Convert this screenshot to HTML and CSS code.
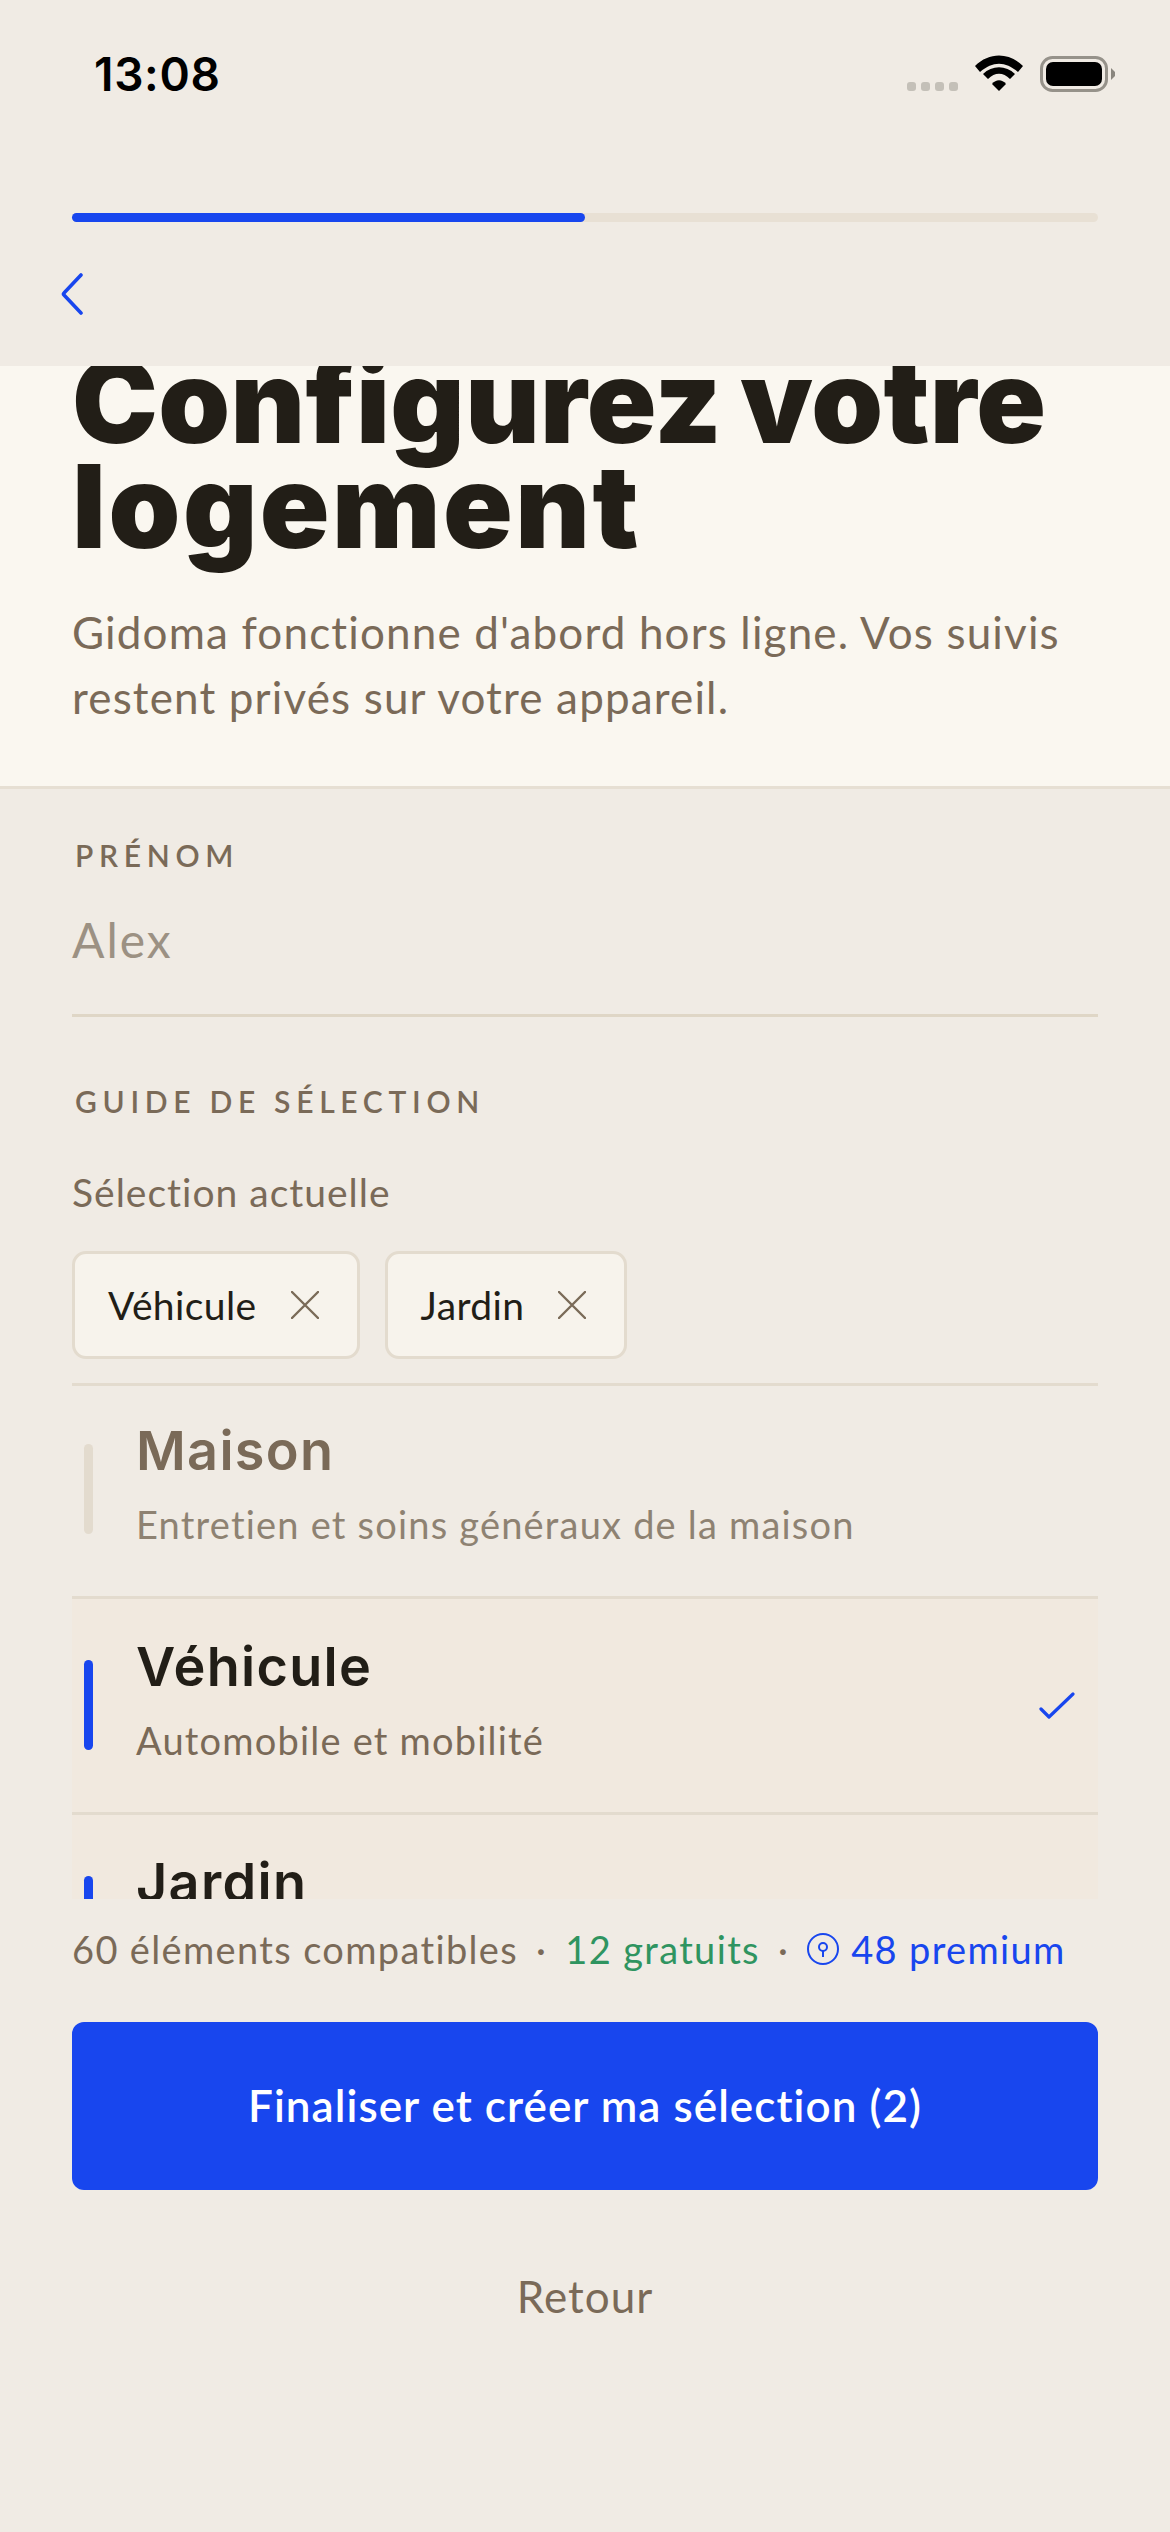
FILE: index.html
```html
<!DOCTYPE html>
<html lang="fr">
    <head>
        <meta charset="utf-8">
        <title>Gidoma</title>
        <link rel="stylesheet" href="styles.css">
    </head>
    <body>
        <div class="screen">
            <div class="topbar">
                <div class="status">
                    <span class="time">13:08</span>
                    <div class="status-icons">
                        <div class="signal"><i></i><i></i><i></i><i></i></div>
                        <svg class="wifi" width="48" height="36" viewBox="0 0 48 36">
                            <path d="M0 11C14-3 34-3 48 11L43 17C30 6 18 6 5 17Z"/>
                            <path d="M8 19C17 10 31 10 40 19L35 24C28 17 20 17 13 24Z"/>
                            <path d="M17 29C21 24 27 24 31 29L24 36Z"/>
                        </svg>
                        <svg class="battery" width="75" height="36" viewBox="0 0 75 36">
                            <rect x="1.5" y="1.5" width="65" height="33" rx="11" fill="none" stroke="#96928a" stroke-width="3"/>
                            <rect x="6" y="6" width="56" height="24" rx="7" fill="#000"/>
                            <path d="M71 12L75 16V20L71 24Z" fill="#8a867e"/>
                        </svg>
                    </div>
                </div>
                <div class="progress"><div class="progress-fill"></div></div>
                <svg class="back" width="24" height="42" viewBox="0 0 24 42">
                    <path d="M21 2L4 20Q3 21 4 22L21 40" fill="none" stroke="#1846ee" stroke-width="3.6" stroke-linecap="round"/>
                </svg>
            </div>

            <div class="scroll">
                <div class="hero">
                    <h1>Configurez votre <span class="wide">logement</span></h1>
                    <p>Gidoma fonctionne d'abord hors ligne. Vos suivis restent privés sur votre appareil.</p>
                </div>
                <div class="form">
                    <div class="label">PRÉNOM</div>
                    <div class="name-input">Alex</div>
                    <div class="label guide-label">GUIDE DE SÉLECTION</div>
                    <div class="current">Sélection actuelle</div>
                    <div class="chips">
                        <div class="chip">
                            <span>Véhicule</span>
                            <svg width="28" height="28" viewBox="0 0 28 28"><path d="M1 1L27 27M27 1L1 27" stroke="#7a6a58" stroke-width="2.4" stroke-linecap="round"/></svg>
                        </div>
                        <div class="chip">
                            <span>Jardin</span>
                            <svg width="28" height="28" viewBox="0 0 28 28"><path d="M1 1L27 27M27 1L1 27" stroke="#7a6a58" stroke-width="2.4" stroke-linecap="round"/></svg>
                        </div>
                    </div>
                    <div class="options">
                        <div class="option">
                            <div class="bar"></div>
                            <div class="option-text">
                                <div class="option-title">Maison</div>
                                <div class="option-sub">Entretien et soins généraux de la maison</div>
                            </div>
                        </div>
                        <div class="option selected">
                            <div class="bar"></div>
                            <div class="option-text">
                                <div class="option-title">Véhicule</div>
                                <div class="option-sub">Automobile et mobilité</div>
                            </div>
                            <svg class="check" width="36" height="28" viewBox="0 0 36 28"><path d="M2 17L10 25L34 2" fill="none" stroke="#1846ee" stroke-width="3.2" stroke-linecap="round" stroke-linejoin="round"/></svg>
                        </div>
                        <div class="option selected">
                            <div class="bar"></div>
                            <div class="option-text">
                                <div class="option-title">Jardin</div>
                            </div>
                        </div>
                    </div>
                </div>
            </div>

            <div class="stats">
                <span>60 éléments compatibles</span>
                <span class="dot">·</span>
                <span class="free">12 gratuits</span>
                <span class="dot">·</span>
                <span class="premium">
                    <svg width="32" height="32" viewBox="0 0 32 32" fill="none" stroke="#1846ee" stroke-width="2">
                        <circle cx="16" cy="16" r="15"/>
                        <circle cx="16" cy="14" r="4"/>
                        <path d="M16 18V24"/>
                    </svg>
                    48 premium
                </span>
            </div>
            <div class="finish">Finaliser et créer ma sélection (2)</div>
            <div class="retour">Retour</div>
        </div>
    </body>
</html>
```

FILE: styles.css
```css
*
{
    box-sizing: border-box;
}
html, body
{
    margin: 0;
    padding: 0;
}
.screen
{
    width: 1170px;
    height: 2532px;
    overflow: hidden;
    background-color: #f0ebe4;
    color: #7a6a58;
    font-family: Lato, "Noto Sans", sans-serif;
}

/* top */
.topbar
{
    height: 366px;
    padding-top: 46px;
}
.status
{
    display: flex;
    justify-content: space-between;
    align-items: flex-start;
    padding: 0 55px 0 94px;
}
.time
{
    font-family: Inter, sans-serif;
    font-size: 46px;
    line-height: 56px;
    font-weight: 600;
    letter-spacing: 0.7px;
    color: #000;
}
.status-icons
{
    display: flex;
    align-items: flex-end;
    margin-top: 9px;
    gap: 17px;
}
.signal
{
    display: flex;
    gap: 5px;
    margin-bottom: 1px;
}
.signal i
{
    width: 9px;
    height: 9px;
    border-radius: 3px;
    background-color: #c4c0b8;
}
.wifi
{
    display: block;
    margin-bottom: 1px;
}
.battery
{
    display: block;
}
.progress
{
    height: 9px;
    margin: 111px 72px 0;
    border-radius: 5px;
    background-color: #e8e0d4;
}
.progress-fill
{
    width: 513px;
    height: 9px;
    border-radius: 5px;
    background-color: #1846ee;
}
.back
{
    display: block;
    margin: 51px 0 0 60px;
}

/* scrolling part */
.scroll
{
    height: 1533px;
    overflow: hidden;
}
.hero
{
    display: flow-root;
    height: 423px;
    padding: 0 72px;
    background-color: #faf7f0;
    border-bottom: 3px solid #e6dfd3;
}
.hero h1
{
    margin: -17px 0 0;
    font-family: Inter, sans-serif;
    font-size: 115px;
    line-height: 105px;
    font-weight: 900;
    letter-spacing: 0.3px;
    word-spacing: -5px;
    color: #221e17;
}
.wide
{
    letter-spacing: 2.5px;
}
.hero p
{
    margin: 41px 0 0;
    font-size: 44px;
    line-height: 65px;
    letter-spacing: 1.15px;
}
.form
{
    padding: 46px 72px 0;
}
.label
{
    margin-left: 3px;
    font-size: 30px;
    line-height: 40px;
    font-weight: 600;
    letter-spacing: 5.7px;
}
.name-input
{
    margin-top: 32px;
    padding-bottom: 41px;
    font-size: 48px;
    line-height: 66px;
    letter-spacing: 2px;
    color: #9c9183;
    border-bottom: 3px solid #dfd6c6;
}
.guide-label
{
    margin-top: 64px;
}
.current
{
    margin-top: 46px;
    font-size: 39px;
    line-height: 50px;
    letter-spacing: 1px;
}
.chips
{
    display: flex;
    gap: 25px;
    margin-top: 34px;
    padding-bottom: 24px;
    border-bottom: 3px solid #e3dbce;
    height: 135px;
}
.chip
{
    display: flex;
    align-items: center;
    gap: 34px;
    height: 108px;
    padding: 0 38px 0 33px;
    border: 3px solid #e3dbce;
    border-radius: 14px;
    background-color: #f7f3ec;
    color: #221e17;
    font-size: 39px;
    letter-spacing: 0.4px;
}
.options
{
    margin-top: -3px;
}
.option
{
    display: flex;
    align-items: flex-start;
    gap: 43px;
    height: 216px;
    padding: 0 23px 0 12px;
    border-bottom: 3px solid #e3dbce;
}
.selected
{
    background-color: #f1e9df;
}
.bar
{
    width: 9px;
    height: 90px;
    margin-top: 61px;
    border-radius: 5px;
    background-color: #e3dbce;
}
.selected .bar
{
    background-color: #1846ee;
}
.option-text
{
    padding-top: 32px;
}
.option-title
{
    font-family: Inter, sans-serif;
    font-size: 54px;
    line-height: 72px;
    font-weight: 600;
    letter-spacing: 1.3px;
    color: #7a6a58;
}
.selected .option-title
{
    color: #221e17;
}
.option-sub
{
    margin-top: 12px;
    font-size: 38px;
    line-height: 50px;
    letter-spacing: 1.2px;
    color: #8e8272;
}
.selected .option-sub
{
    color: #7a6a58;
}
.check
{
    margin: 93px 0 0 auto;
}

/* bottom */
.stats
{
    display: flex;
    align-items: center;
    margin: 25px 0 0 72px;
    font-size: 38px;
    line-height: 50px;
    letter-spacing: 1.35px;
    white-space: nowrap;
}
.dot
{
    margin: 0 18px;
}
.free
{
    color: #2f9460;
}
.premium
{
    display: flex;
    align-items: center;
    gap: 12px;
    color: #1846ee;
}
.finish
{
    display: flex;
    align-items: center;
    justify-content: center;
    height: 168px;
    margin: 48px 72px 0;
    padding-bottom: 2px;
    border-radius: 12px;
    background-color: #1846ee;
    color: #fff;
    font-size: 44px;
    font-weight: 600;
    letter-spacing: 1.05px;
}
.retour
{
    margin-top: 76px;
    text-align: center;
    font-size: 44px;
    line-height: 60px;
    letter-spacing: 1px;
}
```
